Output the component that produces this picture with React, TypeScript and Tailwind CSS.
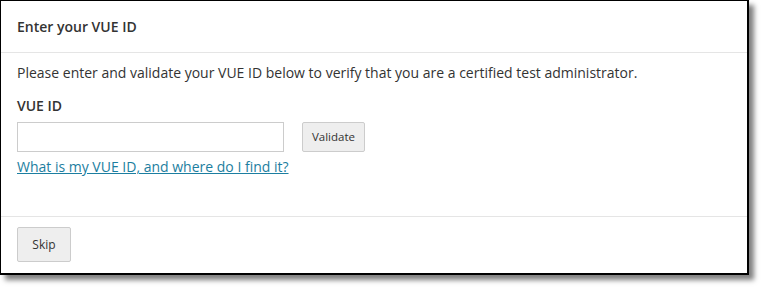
import React from "react";

export default function App() {
  return (
    <div className="w-[763px] h-[290px] bg-white" style={{ fontFamily: '"Open Sans", "Liberation Sans", sans-serif' }}>
      <div className="w-[749px] h-[275px] bg-white border-t border-l border-r-2 border-b-2 border-black shadow-[5px_5px_5px_rgba(0,0,0,0.5)] flex flex-col">
        <div className="h-[52px] border-b border-[#e5e5e5] flex items-center pl-[16px] shrink-0">
          <h1 className="text-[14px] font-semibold text-[#333]">Enter your VUE ID</h1>
        </div>
        <div className="h-[164px] border-b border-[#e5e5e5] pl-[16px] pt-[10px] shrink-0 flex flex-col">
          <p className="text-[14px] leading-[20px] text-[#333]">
            Please enter and validate your VUE ID below to verify that you are a certified test administrator.
          </p>
          <label className="mt-[13px] text-[14px] leading-[20px] font-semibold text-[#333]">VUE ID</label>
          <div className="mt-[6px] flex items-center gap-[18px]">
            <input className="w-[267px] h-[30px] border border-[#cccccc] bg-white outline-none" />
            <button className="w-[63px] h-[30px] border border-[#cccccc] rounded-[2px] bg-[#eeeeee] text-[11.5px] text-[#333]">
              Validate
            </button>
          </div>
          <a href="#" className="mt-[5px] self-start text-[14px] leading-[20px] text-[#1c7ea0] underline">
            What is my VUE ID, and where do I find it?
          </a>
        </div>
        <div className="flex-1 pl-[16px] pt-[10px]">
          <button className="w-[54px] h-[35px] border border-[#cccccc] rounded-[2px] bg-[#eeeeee] text-[12px] text-[#333]">
            Skip
          </button>
        </div>
      </div>
    </div>
  );
}
